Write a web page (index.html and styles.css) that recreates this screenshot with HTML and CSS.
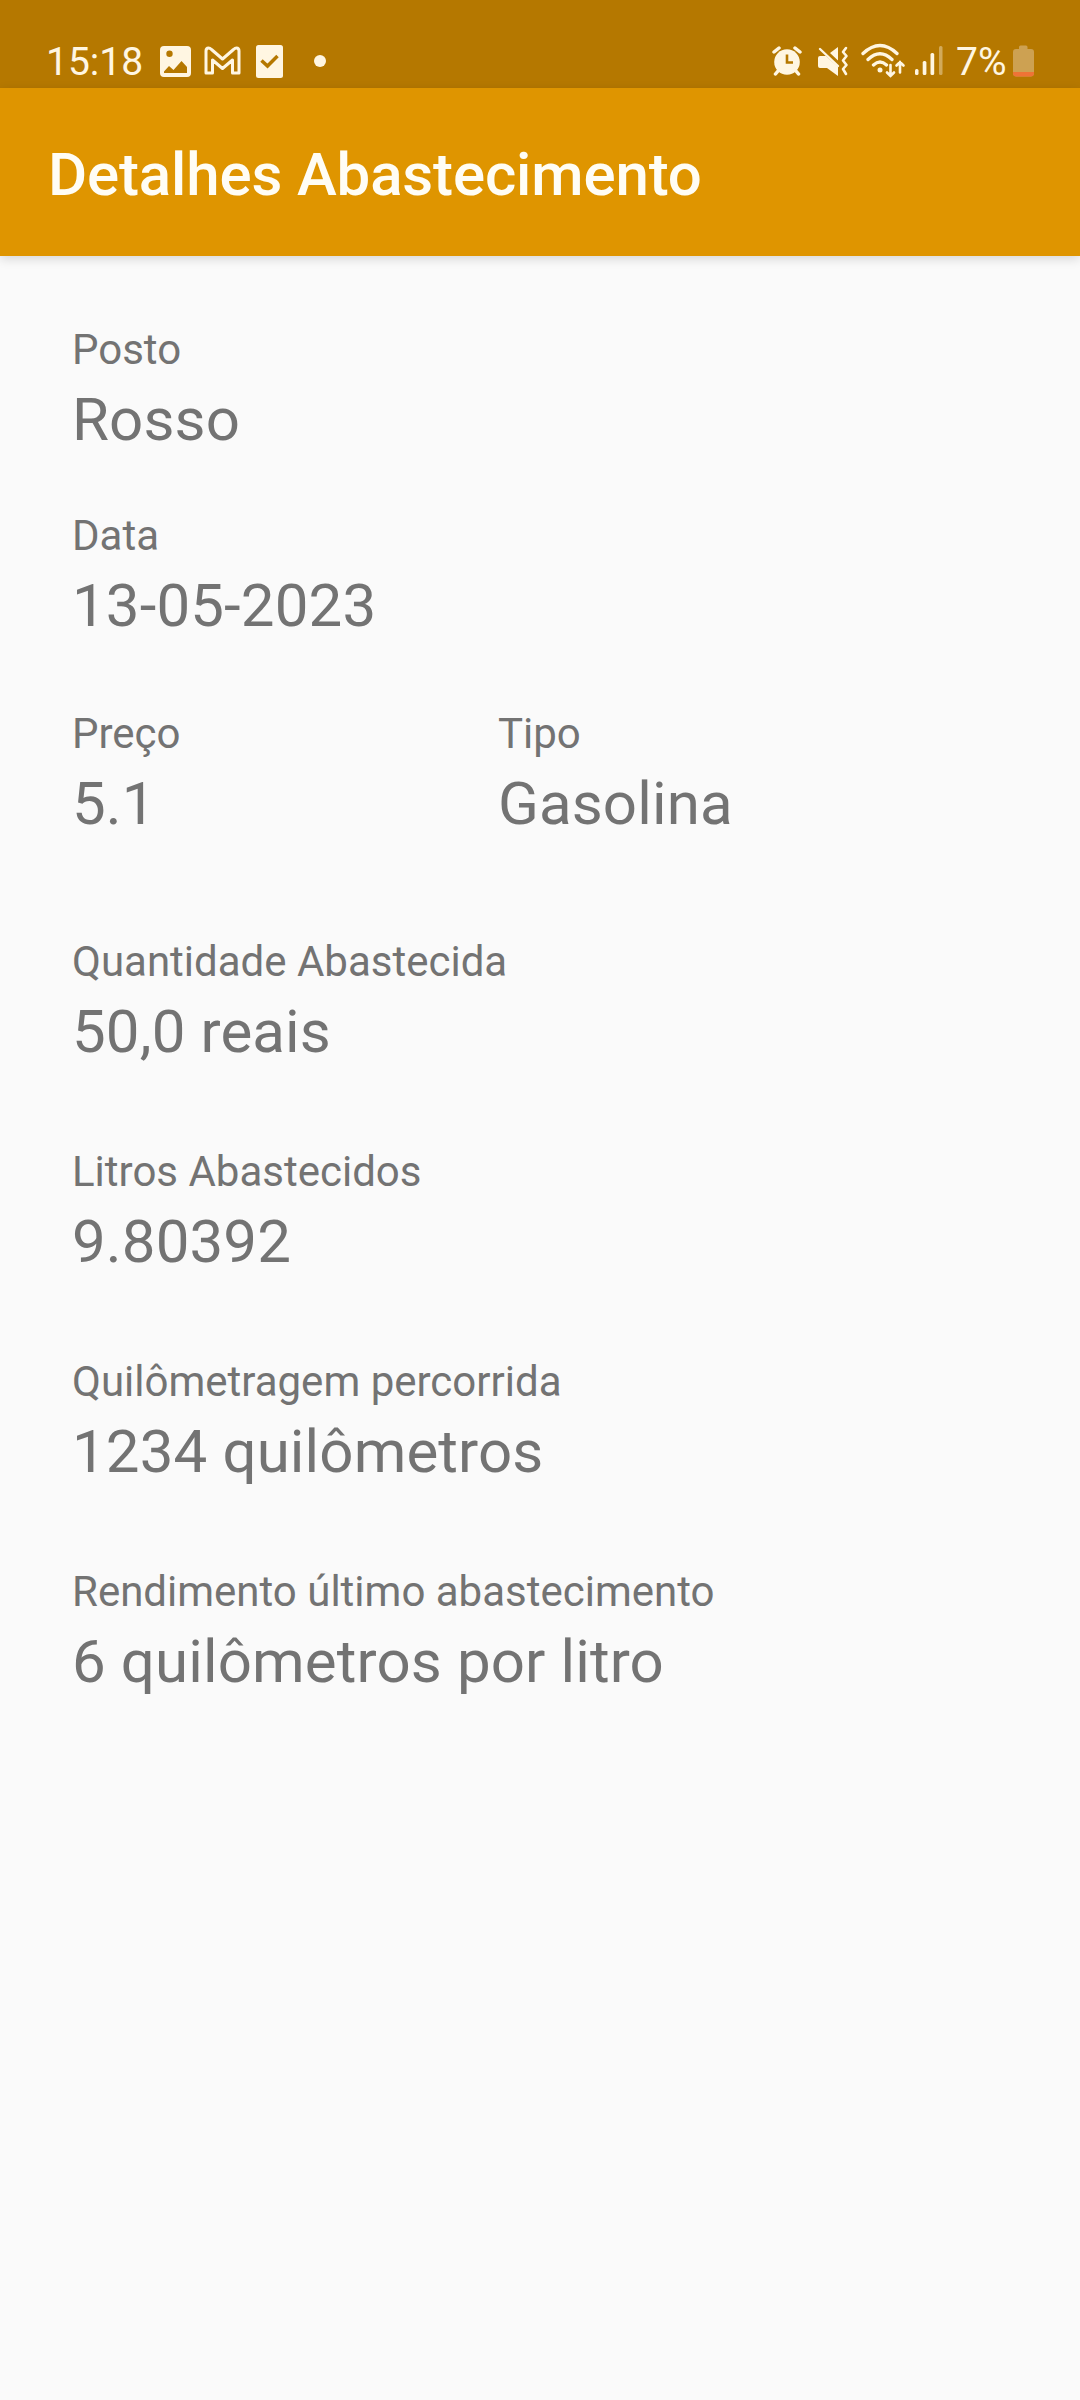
FILE: index.html
```html
<!DOCTYPE html>
<html lang="pt-BR">
<head>
<meta charset="utf-8">
<title>Detalhes Abastecimento</title>
<link rel="stylesheet" href="styles.css">
</head>
<body>
<div class="status-bar">
  <div class="status-left">
    <span class="clock">15:18</span>
    <svg class="icon image-icon" width="31" height="36" viewBox="0 0 31 36"><path fill-rule="evenodd" d="M4 4H27Q31 4 31 8V31Q31 35 27 35H4Q0 35 0 31V8Q0 4 4 4ZM4 29.500V31H27V25L21.500 19L13.500 28L9 24ZM9.500 8.500A3.200 3.200 0 1 0 9.500 14.900A3.200 3.200 0 1 0 9.500 8.500Z"/></svg>
    <svg class="icon mail-icon" width="37" height="36" viewBox="0 0 37 36"><path class="line" stroke-width="3" stroke-linejoin="round" d="M2 9Q2 6 4.500 6Q6 6 7.500 7.500L18.500 17L29.500 7.500Q31 6 32.500 6Q35 6 35 9V31H28.500V18L18.500 26.500L8.500 18V31H2Z"/></svg>
    <svg class="icon task-icon" width="27" height="36" viewBox="0 0 27 36"><rect y="3" width="27" height="33" rx="2.500"/><path class="cut" stroke-width="3.500" d="M5.500 18.500L11.500 24L21.500 14"/></svg>
    <span class="more-dot"></span>
  </div>
  <div class="status-right">
    <svg class="icon alarm-icon" width="30" height="36" viewBox="0 0 30 36"><circle cx="15" cy="20" r="12.800"/><path class="line" stroke-width="3.500" stroke-linecap="round" d="M2 10L7 6M28 10L23 6M6 29L3.500 32M24 29L26.500 32"/><path class="cut" stroke-width="2.600" d="M15 12.500V20.500H21"/></svg>
    <svg class="icon mute-icon" width="31" height="36" viewBox="0 0 31 36"><path d="M2 14H8L20 25V34L9 26H2Q0 26 0 24V16Q0 14 2 14ZM12 11L20 5V18.500Z"/><path class="line" stroke-width="2.400" stroke-linecap="round" d="M2 7L20 24"/><path class="line" stroke-width="2.600" stroke-linecap="round" stroke-linejoin="round" d="M28 6L25 10L28.500 14L25 18.500L28.500 23L25 27L28 32"/></svg>
    <svg class="icon wifi-icon" width="45" height="36" viewBox="0 0 45 36"><g class="line" stroke-width="3.300" stroke-linecap="round"><path d="M2 11.500Q19 -4.500 36 11.500M7 17.500Q19 6 31 17.500M12.500 23Q19 17 25.500 23"/><path stroke-width="2.600" d="M29.500 23V34M26 30.500L29.500 34L33 30.500M39 30.500V20M35.500 23.500L39 20L42.500 23.500"/></g><circle cx="19" cy="28" r="2.500"/></svg>
    <svg class="icon signal-icon" width="28" height="36" viewBox="0 0 28 36"><rect y="27" width="3.500" height="6" rx="1.500"/><rect x="7.700" y="19" width="3.700" height="14" rx="1.500"/><rect x="15.500" y="11" width="3.700" height="22" rx="1.500"/><rect x="24" y="4" width="3.500" height="29" rx="1.500" opacity=".4"/></svg>
    <span class="battery-text">7%</span>
    <svg class="battery-icon" width="23" height="36" viewBox="0 0 23 36"><path fill="#cda152" d="M7 7V5Q7 3.500 8.500 3.500H14Q15.500 3.500 15.500 5V7H19Q22 7 22 10V31Q22 34.500 18.500 34.500H4.500Q1 34.500 1 31V10Q1 7 4 7Z"/><path fill="#ee7336" d="M1 30H22V31Q22 34.500 18.500 34.500H4.500Q1 34.500 1 31Z"/></svg>
  </div>
</div>
<header class="app-bar"><h1 class="title">Detalhes Abastecimento</h1></header>
<main class="details">
  <div class="field"><div class="label">Posto</div><div class="value">Rosso</div></div>
  <div class="field field-date"><div class="label">Data</div><div class="value">13-05-2023</div></div>
  <div class="row">
    <div class="field"><div class="label">Preço</div><div class="value">5.1</div></div>
    <div class="field"><div class="label">Tipo</div><div class="value">Gasolina</div></div>
  </div>
  <div class="group">
    <div class="field"><div class="label">Quantidade Abastecida</div><div class="value">50,0 reais</div></div>
    <div class="field"><div class="label">Litros Abastecidos</div><div class="value">9.80392</div></div>
    <div class="field"><div class="label">Quilômetragem percorrida</div><div class="value">1234 quilômetros</div></div>
    <div class="field"><div class="label">Rendimento último abastecimento</div><div class="value">6 quilômetros por litro</div></div>
  </div>
</main>
</body>
</html>
```
FILE: styles.css
```css
* { box-sizing: border-box; }
body {
  margin: 0;
  min-height: 2400px;
  background: #fafafa;
  color: #737373;
  font-family: Roboto, sans-serif;
}
.status-bar {
  display: flex;
  justify-content: space-between;
  height: 88px;
  padding: 42px 45px 0 46px;
  background: #b57800;
  color: #fff6e2;
}
.status-left, .status-right { display: flex; height: 36px; }
.icon { fill: #fff6e2; }
.line { fill: none; stroke: #fff6e2; }
.cut { fill: none; stroke: #b57800; }
.clock, .battery-text { font-size: 39px; line-height: 40px; white-space: nowrap; }
.clock { width: 114px; }
.mail-icon { margin-left: 13px; }
.task-icon { margin-left: 15px; }
.more-dot {
  width: 12px;
  height: 12px;
  margin: 13px 0 0 31px;
  border-radius: 50%;
  background: #fff6e2;
}
.mute-icon { margin-left: 16px; }
.wifi-icon { margin-left: 12px; }
.signal-icon { margin-left: 9px; }
.battery-text { width: 56px; margin-left: 13px; }
.app-bar {
  display: flex;
  align-items: center;
  height: 168px;
  padding: 5px 0 0 48px;
  background: #df9500;
  box-shadow: 0 3px 10px rgba(0, 0, 0, .14);
}
.title {
  margin: 0;
  color: #fffdf5;
  font-size: 60px;
  font-weight: 500;
  line-height: 70px;
  letter-spacing: -.14px;
}
.details { padding: 65px 72px 0; }
.label { font-size: 42px; line-height: 58px; }
.value { font-size: 60px; line-height: 82px; letter-spacing: .13px; }
.field-date { margin-top: 46px; }
.row { display: grid; grid-template-columns: 426px 1fr; margin-top: 58px; }
.group { display: grid; gap: 70px; margin-top: 88px; }
```
